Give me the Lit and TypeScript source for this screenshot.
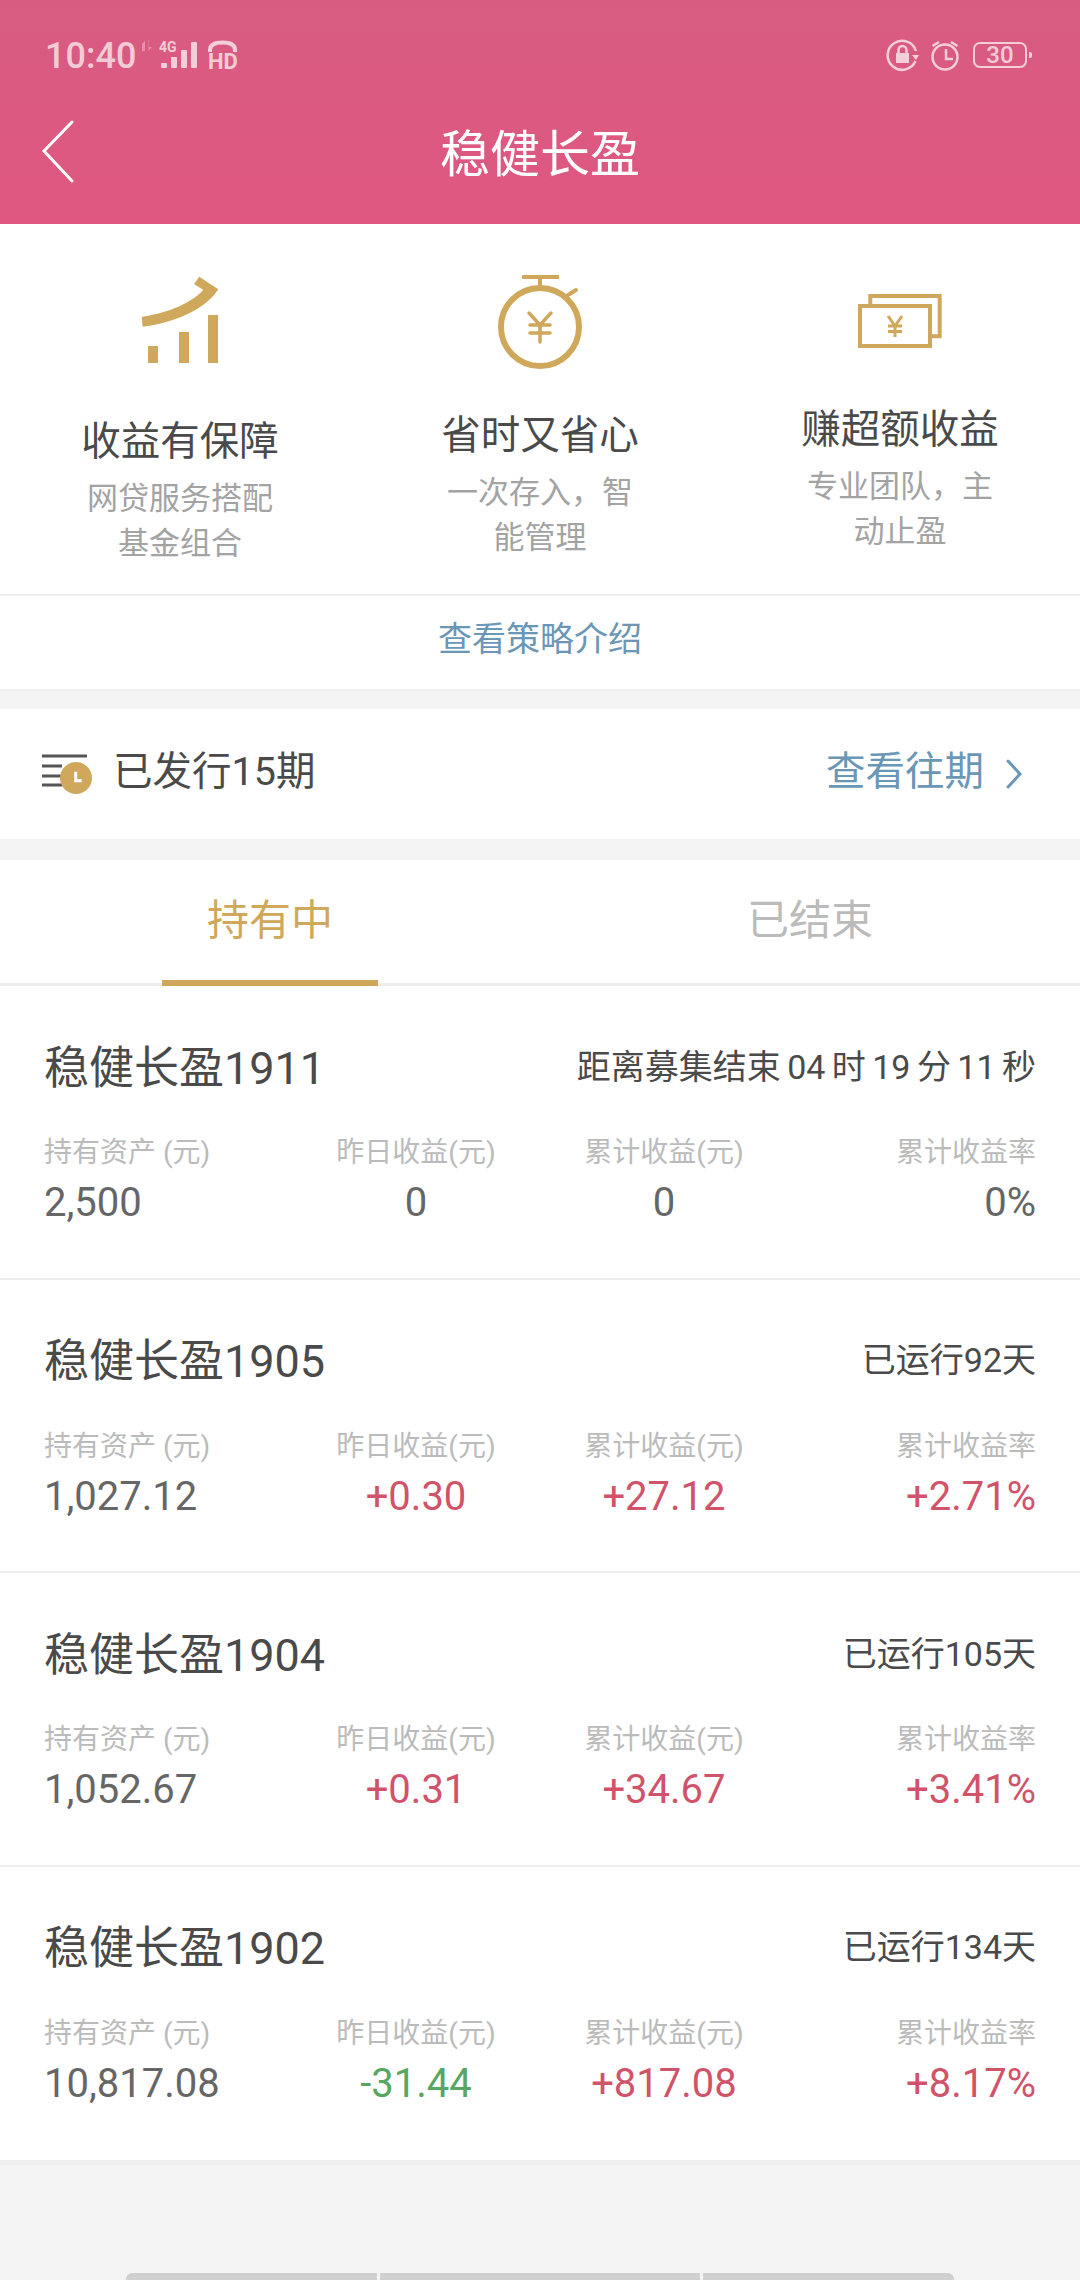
import { LitElement, html, css, svg } from 'lit'
import { customElement } from 'lit/decorators.js'

type Tone = 'flat' | 'up' | 'down'
interface Stat { value: string; tone: Tone }
interface Plan { name: string; note: string; stats: Stat[] }

const flat = (value: string): Stat => ({ value, tone: 'flat' })
const tone = (value: string): Stat => ({ value, tone: value.startsWith('-') ? 'down' : 'up' })

const LABELS = ['持有资产 (元)', '昨日收益(元)', '累计收益(元)', '累计收益率']

const PLANS: Plan[] = [
  { name: '稳健长盈1911', note: '距离募集结束 04 时 19 分 11 秒', stats: [flat('2,500'), flat('0'), flat('0'), flat('0%')] },
  { name: '稳健长盈1905', note: '已运行92天', stats: [flat('1,027.12'), tone('+0.30'), tone('+27.12'), tone('+2.71%')] },
  { name: '稳健长盈1904', note: '已运行105天', stats: [flat('1,052.67'), tone('+0.31'), tone('+34.67'), tone('+3.41%')] },
  { name: '稳健长盈1902', note: '已运行134天', stats: [flat('10,817.08'), tone('-31.44'), tone('+817.08'), tone('+8.17%')] },
]

const chartIcon = svg`
  <path d="M21.700 46.700C42 44 68 36 83.300 20L74 14L79.300 6.700L98.300 19.300C88 36 60 52 22.700 56.700Z" fill="currentColor" />
  <rect x="28" y="76" width="10" height="17" fill="currentColor" />
  <rect x="59" y="62" width="10" height="31" fill="currentColor" />
  <rect x="88" y="45" width="10" height="48" fill="currentColor" />
`

const watchIcon = svg`
  <g fill="none" stroke="currentColor">
    <circle cx="60" cy="57" r="39" stroke-width="6" />
    <path d="M42 7H79M60 7V17" stroke-width="4" />
    <path d="M88 25L96 20" stroke-width="4" stroke-linecap="round" />
    <path d="M49 43L60 55L71 43M50 55H70M50 63H70M60 55V72" stroke-width="3.500" stroke-linecap="round" />
  </g>
`

const cashIcon = svg`
  <g fill="none" stroke="currentColor">
    <rect x="20" y="36" width="70" height="40" stroke-width="4" />
    <path d="M30.300 34V26H99.700V66.300H92" stroke-width="4" />
    <path d="M48 46L55 56L62 46M48 56H62M48 61.500H62M55 56V67" stroke-width="3" />
  </g>
`

const FEATURES = [
  { cls: 'f1', icon: chartIcon, title: '收益有保障', text: '网贷服务搭配 基金组合' },
  { cls: 'f2', icon: watchIcon, title: '省时又省心', text: '一次存入\uFF0C智能管理' },
  { cls: 'f3', icon: cashIcon, title: '赚超额收益', text: '专业团队\uFF0C主动止盈' },
]

@customElement('app-root')
export class AppRoot extends LitElement {
  static styles = css`
    :host {
      display: flex;
      flex-direction: column;
      min-height: 2280px;
      background: #f4f4f4;
      font-family: Roboto, 'Noto Sans CJK SC', sans-serif;
      color: #4a4a4a;
    }

    .header {
      height: 224px;
      background: linear-gradient(#d85c82, #df5780);
      color: #fff;
    }

    .status {
      display: flex;
      align-items: flex-start;
      height: 100px;
      box-sizing: border-box;
      padding: 39px 53px 0 45px;
      color: rgba(255, 255, 255, 0.7);
    }

    .time {
      font-size: 36px;
      line-height: 34px;
      font-weight: 500;
      margin-right: 3px;
    }

    .status-left {
      display: block;
      overflow: visible;
    }

    .status-right {
      display: flex;
      align-items: flex-start;
      gap: 9px;
      margin-left: auto;
    }

    .battery {
      position: relative;
      width: 54px;
      height: 26px;
      box-sizing: border-box;
      margin: 3px 0 0 2px;
      border: 2px solid currentColor;
      border-radius: 7px;
      display: flex;
      align-items: center;
      justify-content: center;
      font-size: 24px;
      font-weight: 500;
    }

    .battery::after {
      content: '';
      position: absolute;
      right: -7px;
      top: 8px;
      width: 3px;
      height: 6px;
      border-radius: 0 2px 2px 0;
      background: currentColor;
    }

    .nav {
      position: relative;
      height: 106px;
      box-sizing: border-box;
      padding-bottom: 6px;
      display: flex;
      align-items: center;
      justify-content: center;
      font-size: 50px;
    }

    .back {
      position: absolute;
      left: 40px;
      top: 20px;
    }

    .features {
      display: grid;
      grid-template-columns: repeat(3, 1fr);
      height: 372px;
      box-sizing: border-box;
      padding-top: 46px;
      background: #fff;
      border-bottom: 2px solid #eee;
    }

    .feature {
      display: flex;
      flex-direction: column;
      align-items: center;
      text-align: center;
    }

    .feature-icon {
      display: block;
      color: #cfa85c;
    }

    .feature-title {
      font-size: 39.500px;
      line-height: 56px;
    }

    .f1 .feature-title { margin-top: 44px; }
    .f2 .feature-title { margin-top: 38px; }
    .f3 .feature-title { margin-top: 32px; }

    .feature-text {
      width: 190px;
      margin-top: 6px;
      font-size: 31px;
      line-height: 45px;
      color: #a3a3a3;
    }

    .strategy {
      height: 95px;
      box-sizing: border-box;
      padding-bottom: 12px;
      display: flex;
      align-items: center;
      justify-content: center;
      background: #fff;
      border-bottom: 2px solid #eee;
      font-size: 34px;
      color: #6b97b6;
    }

    .issued {
      display: flex;
      align-items: center;
      height: 130px;
      box-sizing: border-box;
      margin-top: 18px;
      padding: 0 56px 14px 42px;
      background: #fff;
      font-size: 39.500px;
    }

    .issued-icon {
      display: block;
      margin: 16px 19px 0 0;
    }

    .history {
      display: flex;
      align-items: center;
      margin-left: auto;
      color: #6b97b6;
    }

    .chevron {
      display: block;
      margin: 14px 0 0 20px;
    }

    .tabs {
      display: flex;
      height: 126px;
      box-sizing: border-box;
      margin-top: 21px;
      background: #fff;
      border-bottom: 3px solid #eee;
    }

    .tab {
      position: relative;
      flex: 1;
      display: flex;
      align-items: center;
      justify-content: center;
      padding-bottom: 11px;
      font-size: 42px;
      color: #bbb;
    }

    .tab.active {
      color: #cfa85c;
    }

    .tab.active::after {
      content: '';
      position: absolute;
      left: 162px;
      width: 216px;
      bottom: -3px;
      height: 6px;
      background: #cfa85c;
    }

    .list {
      background: #fff;
      border-bottom: 5px solid #eee;
    }

    .plan {
      height: 293.500px;
      box-sizing: border-box;
      padding: 53px 44px 0;
    }

    .plan:not(:last-child) {
      border-bottom: 2px solid #eee;
    }

    .plan-head {
      display: flex;
      align-items: center;
      justify-content: space-between;
      height: 50px;
    }

    .plan-name {
      font-size: 45px;
    }

    .plan-note {
      font-size: 34px;
      word-spacing: -2px;
    }

    .stats {
      display: grid;
      grid-template-columns: repeat(4, 1fr);
      margin-top: 44px;
      text-align: center;
    }

    .label {
      font-size: 28px;
      line-height: 40px;
      color: #bbb;
    }

    .value {
      margin-top: 5px;
      font-size: 40px;
      line-height: 50px;
      color: #666;
    }

    .value.up { color: #d1536a; }
    .value.down { color: #58a663; }

    .stats > :nth-child(4n + 1) { text-align: left; }
    .stats > :nth-child(4n) { text-align: right; }

    .gesture {
      display: flex;
      gap: 3px;
      margin: auto 0 0 126px;
      width: 828px;
      height: 7px;
    }

    .gesture span {
      background: #d0d0d0;
    }

    .gesture span:nth-child(1) { width: 251px; border-radius: 6px 0 0 0; }
    .gesture span:nth-child(2) { width: 320px; }
    .gesture span:nth-child(3) { width: 251px; border-radius: 0 6px 0 0; }
  `

  private renderStatus() {
    return html`
      <div class="status">
        <span class="time">10:40</span>
        <svg class="status-left" width="100" height="32" viewBox="0 0 100 32" fill="currentColor">
          <path d="M3 12V5L6 1.500V12ZM10 1V8L13 8L9.500 12V1Z" opacity="0.45" />
          <text x="20" y="13" font-size="14" font-weight="700">4G</text>
          <rect x="22" y="24" width="6" height="5" rx="1" />
          <rect x="32" y="18" width="6" height="11" rx="1" />
          <rect x="42" y="11" width="6" height="18" rx="1" />
          <rect x="52" y="3" width="6" height="26" rx="1" />
          <path d="M71 13V11Q71 3.500 83.500 3.500Q96 3.500 96 11V13" fill="none" stroke="currentColor" stroke-width="4" />
          <text x="69" y="30" font-size="22" font-weight="700">HD</text>
        </svg>
        <div class="status-right">
          <svg width="34" height="34" viewBox="0 0 34 34">
            <path d="M30.500 22A14.500 14.500 0 1 1 31 12" fill="none" stroke="currentColor" stroke-width="2.500" />
            <path d="M27 16H34L31 21Z" fill="currentColor" />
            <path d="M13.500 14V11A4 4 0 0 1 21.500 11V14" fill="none" stroke="currentColor" stroke-width="2.500" />
            <rect x="11" y="14" width="13" height="10" fill="currentColor" />
          </svg>
          <svg width="34" height="34" viewBox="0 0 34 34" fill="none" stroke="currentColor">
            <circle cx="17" cy="18" r="12.500" stroke-width="2.500" />
            <path d="M4.500 7L11 3M23 3L29.500 7" stroke-width="2.500" />
            <path d="M18 10V20H25" stroke-width="2.500" />
          </svg>
          <div class="battery">30</div>
        </div>
      </div>
    `
  }

  private renderFeatures() {
    return html`
      <section class="features">
        ${FEATURES.map(
          (f) => html`
            <div class="feature ${f.cls}">
              <svg class="feature-icon" width="120" height="100" viewBox="0 0 120 100">${f.icon}</svg>
              <div class="feature-title">${f.title}</div>
              <div class="feature-text">${f.text}</div>
            </div>
          `,
        )}
      </section>
      <div class="strategy">查看策略介绍</div>
    `
  }

  private renderPlan(plan: Plan) {
    return html`
      <article class="plan">
        <div class="plan-head">
          <span class="plan-name">${plan.name}</span>
          <span class="plan-note">${plan.note}</span>
        </div>
        <div class="stats">
          ${LABELS.map((l) => html`<div class="label">${l}</div>`)}
          ${plan.stats.map((s) => html`<div class="value ${s.tone}">${s.value}</div>`)}
        </div>
      </article>
    `
  }

  render() {
    return html`
      <header class="header">
        ${this.renderStatus()}
        <div class="nav">
          <svg class="back" width="36" height="64" viewBox="0 0 36 64" fill="none" stroke="#fff" stroke-width="3">
            <path d="M32 2L4 31L32 61" stroke-linecap="round" />
          </svg>
          稳健长盈
        </div>
      </header>
      ${this.renderFeatures()}
      <section class="issued">
        <svg class="issued-icon" width="52" height="46" viewBox="0 0 52 46">
          <path d="M0 4H45M0 14H20M0 24H20M0 33H20" stroke="#555" stroke-width="3" />
          <circle cx="34" cy="26" r="16" fill="#cfa85c" />
          <path d="M33.700 19.700V28.700H39.700" fill="none" stroke="#fff" stroke-width="3" />
        </svg>
        <span>已发行15期</span>
        <div class="history">
          查看往期
          <svg class="chevron" width="20" height="30" viewBox="0 0 20 30" fill="none" stroke="#6b97b6" stroke-width="3">
            <path d="M4 2L16 15L4 28" stroke-linecap="round" />
          </svg>
        </div>
      </section>
      <nav class="tabs">
        <div class="tab active">持有中</div>
        <div class="tab">已结束</div>
      </nav>
      <section class="list">${PLANS.map((p) => this.renderPlan(p))}</section>
      <div class="gesture"><span></span><span></span><span></span></div>
    `
  }
}
